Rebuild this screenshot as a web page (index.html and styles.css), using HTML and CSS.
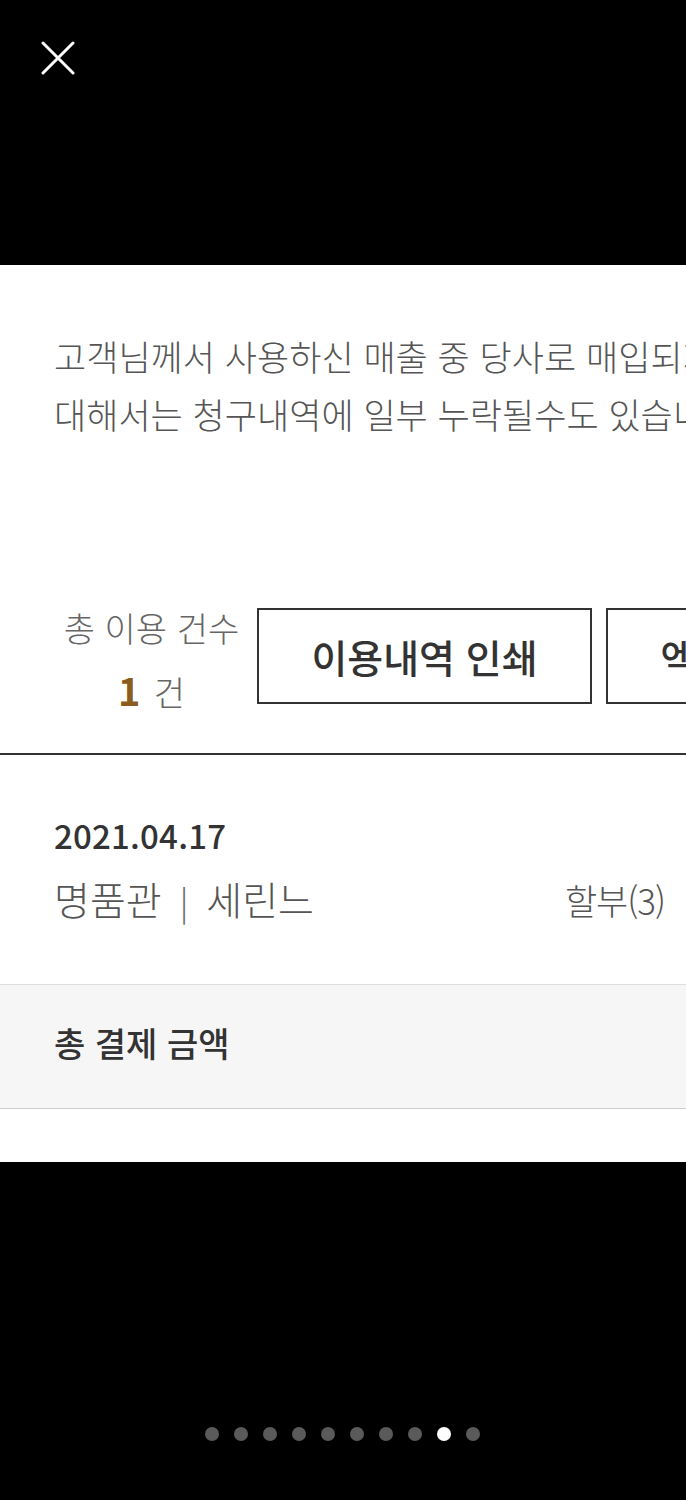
FILE: index.html
```html
<!DOCTYPE html>
<html lang="ko">
<head>
<meta charset="utf-8">
<link rel="stylesheet" href="styles.css">
</head>
<body>
<div class="screen">
  <div class="top">
    <button class="close" aria-label="닫기">
      <svg width="34" height="34" viewBox="0 0 34 34"><path d="M2 2 L32 32 M32 2 L2 32" stroke="#fff" stroke-width="3" stroke-linecap="round"/></svg>
    </button>
  </div>
  <div class="panel">
    <p class="notice">고객님께서 사용하신 매출 중 당사로 매입되지 않은 매출에<br>대해서는 청구내역에 일부 누락될수도 있습니다.</p>
    <div class="summary">
      <div class="count">
        <div class="count-label">총 이용 건수</div>
        <div class="count-value"><span class="num">1</span> 건</div>
      </div>
      <div class="btn">이용내역 인쇄</div>
      <div class="btn">엑셀 다운로드</div>
    </div>
    <div class="item">
      <div class="date">2021.04.17</div>
      <div class="item-row">
        <span class="store">명품관<span class="bar">|</span>세린느</span>
        <span class="pay">할부(3)</span>
      </div>
    </div>
    <div class="total">총 결제 금액</div>
  </div>
  <div class="bottom">
    <div class="dots">
      <span class="dot"></span><span class="dot"></span><span class="dot"></span><span class="dot"></span><span class="dot"></span><span class="dot"></span><span class="dot"></span><span class="dot"></span><span class="dot active"></span><span class="dot"></span>
    </div>
  </div>
</div>
</body>
</html>
```
FILE: styles.css
```css
html, body {
  margin: 0;
  padding: 0;
  background: #000;
}
body {
  font-family: "Noto Sans CJK KR", "Noto Sans", sans-serif;
  width: 686px;
  height: 1500px;
  overflow: hidden;
}
.screen {
  display: flex;
  flex-direction: column;
  height: 1500px;
}
.top {
  flex: 0 0 265px;
  background: #000;
  padding: 41px 0 0 41px;
  box-sizing: border-box;
}
.close {
  background: none;
  border: 0;
  padding: 0;
  width: 34px;
  height: 34px;
  display: block;
}
.close svg { display: block; }
.panel {
  flex: 0 0 897px;
  background: #fff;
  overflow: hidden;
  display: flex;
  flex-direction: column;
}
.notice {
  margin: 0;
  padding: 62px 0 0 54px;
  font-size: 35px;
  font-weight: 300;
  line-height: 58px;
  color: #555;
  white-space: nowrap;
}
.summary {
  display: flex;
  align-items: flex-start;
  margin-top: 165px;
  padding-left: 60px;
  gap: 14px;
  height: 96px;
  white-space: nowrap;
}
.count {
  flex: 0 0 183px;
  text-align: center;
  color: #666;
  font-size: 34px;
  font-weight: 300;
  line-height: 62px;
  margin-top: -11px;
}
.count-value .num {
  color: #8a5c1e;
  font-weight: 700;
  font-size: 38px;
  margin-right: 4px;
}
.btn {
  flex: 0 0 auto;
  width: 331px;
  height: 92px;
  border: 2px solid #333;
  display: flex;
  align-items: center;
  justify-content: center;
  font-size: 39px;
  font-weight: 500;
  color: #333;
}
.item {
  margin-top: 49px;
  border-top: 2px solid #333;
  padding: 60px 21px 0 54px;
  height: 231px;
  box-sizing: border-box;
}
.date {
  font-size: 33px;
  font-weight: 500;
  color: #333;
  line-height: 40px;
  letter-spacing: 0.2px;
}
.item-row {
  display: flex;
  justify-content: space-between;
  align-items: center;
  margin-top: 21px;
  font-size: 39px;
  font-weight: 300;
  color: #555;
  line-height: 44px;
}
.bar {
  margin: 0 18px;
  font-size: 34px;
  color: #666;
}
.pay {
  font-size: 35px;
  letter-spacing: -1px;
}
.total {
  border-top: 1px solid #ddd;
  border-bottom: 1px solid #ccc;
  background: #f6f6f6;
  height: 125px;
  box-sizing: border-box;
  padding: 0 0 8px 54px;
  display: flex;
  align-items: center;
  font-size: 34px;
  font-weight: 500;
  color: #333;
}
.bottom {
  flex: 1;
}
.dots {
  display: flex;
  gap: 15px;
  padding: 265px 0 0 205px;
}
.dot {
  width: 14px;
  height: 14px;
  border-radius: 50%;
  background: #5a5a5a;
}
.dot.active { background: #fff; }
```
